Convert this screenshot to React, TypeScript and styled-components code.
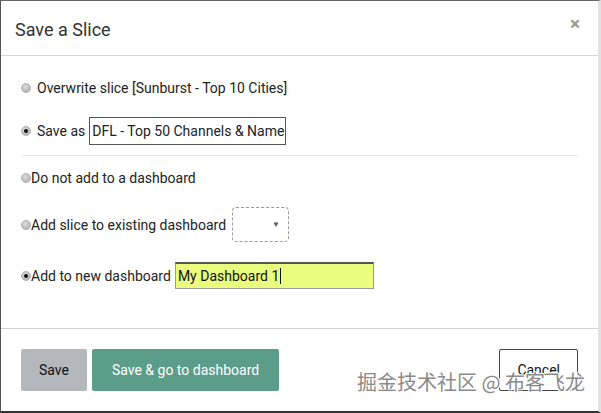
import React from 'react'
import styled, { createGlobalStyle } from 'styled-components'

const GlobalStyle = createGlobalStyle`
  html, body {
    margin: 0;
    padding: 0;
    background: #3a3a3a;
    font-family: Roboto, "Liberation Sans", sans-serif;
  }
`

const Modal = styled.div`
  position: relative;
  box-sizing: border-box;
  width: 601px;
  height: 413px;
  margin: 0;
  background: #fff;
  border-left: 1px solid #555;
  border-top: 1px solid #666;
  border-bottom: 2px solid #333;
  border-right: 3px solid #e2e2e2;
  display: flex;
  flex-direction: column;
  color: #222;
`

const Header = styled.div`
  height: 55px;
  box-sizing: border-box;
  border-bottom: 1px solid #d6d6d6;
  display: flex;
  align-items: center;
  justify-content: space-between;
  padding: 2px 15px 0 14px;
`

const Title = styled.h4`
  margin: 0;
  font-size: 18px;
  font-weight: 400;
  color: #333;
`

const Close = styled.span`
  font-size: 19px;
  font-weight: 700;
  color: #9a9a9a;
  line-height: 1;
  margin-top: -11px;
  margin-right: 3px;
`

const Body = styled.div`
  flex: 1;
  box-sizing: border-box;
  padding: 22px 20px 0 20px;
  border-bottom: 1px solid #d0d0d0;
  font-size: 14px;
`

const Row = styled.div<{ top: number; h: number; gap: number }>`
  display: flex;
  align-items: center;
  height: ${({ h }) => h}px;
  margin-top: ${({ top }) => top}px;
  gap: ${({ gap }) => gap}px;
  color: #222;
`

const Radio = styled.span<{ checked?: boolean }>`
  box-sizing: border-box;
  width: 10px;
  height: 10px;
  border-radius: 50%;
  background: radial-gradient(circle at 40% 35%, #ddd, #a8a8a8);
  border: 1px solid #b0b0b0;
  display: inline-flex;
  align-items: center;
  justify-content: center;
  flex-shrink: 0;

  &::after {
    content: '';
    display: ${({ checked }) => (checked ? 'block' : 'none')};
    width: 4px;
    height: 4px;
    border-radius: 50%;
    background: #111;
  }
`

const Label = styled.span`
  white-space: nowrap;
`

const NameInput = styled.div`
  box-sizing: border-box;
  width: 197px;
  height: 28px;
  border: 1px solid #555;
  padding: 0 2px;
  display: flex;
  align-items: center;
  font-size: 14px;
  white-space: nowrap;
  overflow: hidden;
  margin-left: -2px;
`

const Separator = styled.div`
  height: 1px;
  background: #e6e6e6;
  margin-top: 10px;
  margin-left: 1px;
`

const SelectBox = styled.div`
  box-sizing: border-box;
  width: 57px;
  height: 35px;
  border: 1px dashed #999;
  border-radius: 4px;
  display: flex;
  align-items: center;
  justify-content: flex-end;
  padding-right: 8px;
  margin-left: 6px;
  font-size: 8px;
  color: #555;
`

const NewDashInput = styled.div`
  box-sizing: border-box;
  width: 199px;
  height: 27px;
  background: #eafd7d;
  border: 1px solid #999;
  border-top: 2px solid #555;
  display: flex;
  align-items: center;
  padding-left: 2px;
  margin-left: 4px;
  font-size: 14px;
  color: #111;
`

const Caret = styled.span`
  display: inline-block;
  width: 1px;
  height: 16px;
  background: #111;
  margin-left: 1px;
`

const Footer = styled.div`
  height: 82px;
  box-sizing: border-box;
  padding: 20px 20px 0 20px;
  display: flex;
  align-items: flex-start;
  gap: 5px;
`

const Button = styled.button<{ variant: 'gray' | 'green' | 'white' }>`
  box-sizing: border-box;
  height: 42px;
  font-family: Roboto, "Liberation Sans", sans-serif;
  font-size: 14px;
  border-radius: 2px;
  padding: 0 ${({ variant }) => (variant === 'green' ? 19 : 17)}px;
  cursor: pointer;
  background: ${({ variant }) =>
    variant === 'gray' ? '#b4b8bd' : variant === 'green' ? '#5b9d89' : '#fff'};
  color: ${({ variant }) => (variant === 'green' ? '#fff' : '#111')};
  border: ${({ variant }) =>
    variant === 'white' ? '1px solid #444' : '1px solid transparent'};
`

const Spacer = styled.div`
  flex: 1;
`

const Watermark = styled.div`
  position: absolute;
  left: 356px;
  top: 366px;
  font-family: "Noto Sans CJK SC", sans-serif;
  font-size: 20px;
  color: #8a8a8a;
  white-space: nowrap;
  text-shadow: 1px 1px 0 #fff, -1px -1px 0 #fff, 1px -1px 0 #fff, -1px 1px 0 #fff;
`

const App: React.FC = () => (
  <>
    <GlobalStyle />
    <Modal>
      <Header>
        <Title>Save a Slice</Title>
        <Close>×</Close>
      </Header>
      <Body>
        <Row top={0} h={20} gap={6}>
          <Radio />
          <Label>Overwrite slice [Sunburst - Top 10 Cities]</Label>
        </Row>
        <Row top={19} h={28} gap={6}>
          <Radio checked />
          <Label>Save as</Label>
          <NameInput>DFL - Top 50 Channels &amp; Name</NameInput>
        </Row>
        <Separator />
        <Row top={12} h={20} gap={0}>
          <Radio />
          <Label>Do not add to a dashboard</Label>
        </Row>
        <Row top={19} h={35} gap={0}>
          <Radio />
          <Label>Add slice to existing dashboard</Label>
          <SelectBox>▼</SelectBox>
        </Row>
        <Row top={20} h={27} gap={0}>
          <Radio checked />
          <Label>Add to new dashboard</Label>
          <NewDashInput>
            My Dashboard 1<Caret />
          </NewDashInput>
        </Row>
      </Body>
      <Footer>
        <Button variant="gray">Save</Button>
        <Button variant="green">Save &amp; go to dashboard</Button>
        <Spacer />
        <Button variant="white">Cancel</Button>
      </Footer>
      <Watermark>掘金技术社区 @ 布客飞龙</Watermark>
    </Modal>
  </>
)

export default App
